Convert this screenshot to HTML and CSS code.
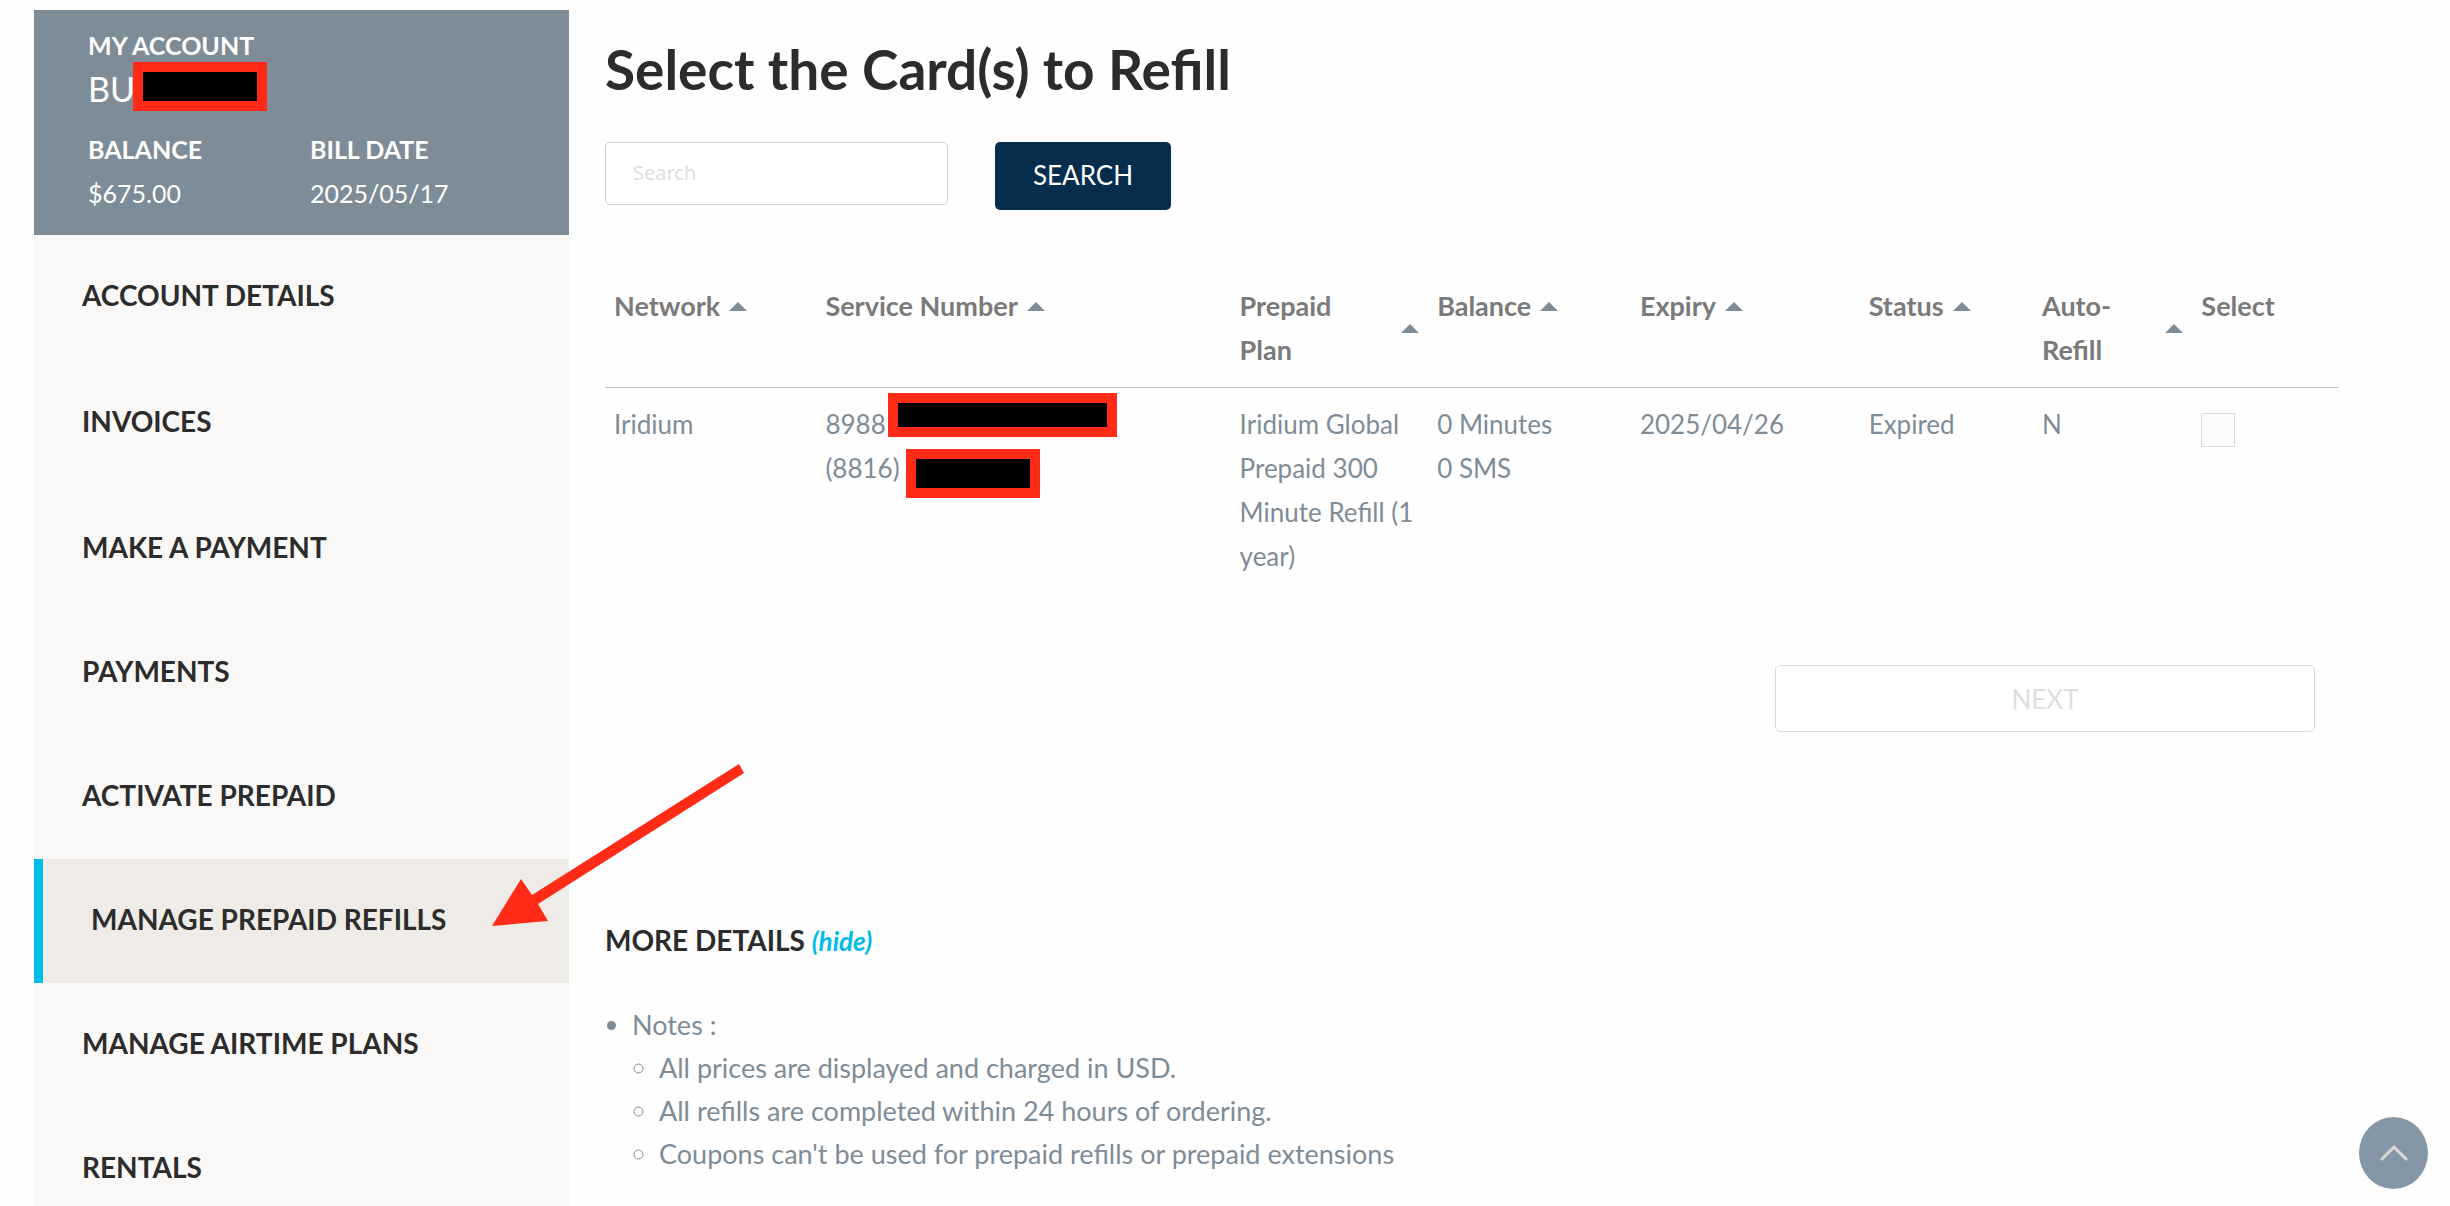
FILE: index.html
```
<!DOCTYPE html>
<html lang="en">
<head>
  <meta charset="utf-8">
  <meta name="viewport" content="width=device-width, initial-scale=1">
  <title>Manage Prepaid Refills</title>
  <link rel="stylesheet" href="styles.css">
</head>
<body>
  <div class="page">
    <aside class="sidebar">
      <section class="account">
        <h2 class="account-label">MY ACCOUNT</h2>
        <p class="account-name">BU<span class="redact redact-name"></span></p>
        <dl class="account-facts">
          <div><dt class="account-label">BALANCE</dt><dd>$675.00</dd></div>
          <div><dt class="account-label">BILL DATE</dt><dd>2025/05/17</dd></div>
        </dl>
      </section>
      <nav>
        <ul class="menu">
          <li><a href="#">ACCOUNT DETAILS</a></li>
          <li><a href="#">INVOICES</a></li>
          <li><a href="#">MAKE A PAYMENT</a></li>
          <li><a href="#">PAYMENTS</a></li>
          <li><a href="#">ACTIVATE PREPAID</a></li>
          <li class="active"><a href="#" aria-current="page">MANAGE PREPAID REFILLS</a>
            <svg class="arrow" width="252" height="164" viewBox="0 0 252 164" aria-hidden="true"><path d="M247 0L252 9L46 140L56 157L0 162L29 115L40 131Z" fill="#ff2b17"/></svg>
          </li>
          <li><a href="#">MANAGE AIRTIME PLANS</a></li>
          <li><a href="#">RENTALS</a></li>
        </ul>
      </nav>
    </aside>

    <main class="main">
      <h1>Select the Card(s) to Refill</h1>
      <form class="search">
        <input type="text" placeholder="Search" aria-label="Search">
        <button type="button">SEARCH</button>
      </form>

      <table class="cards">
        <colgroup>
          <col class="c-network"><col class="c-service"><col class="c-plan"><col class="c-balance">
          <col class="c-expiry"><col class="c-status"><col class="c-auto"><col>
        </colgroup>
        <thead>
          <tr>
            <th scope="col"><button class="sort" type="button">Network</button></th>
            <th scope="col"><button class="sort" type="button">Service Number</button></th>
            <th scope="col"><button class="sort sort-wide" type="button"><span>Prepaid<br>Plan</span></button></th>
            <th scope="col"><button class="sort" type="button">Balance</button></th>
            <th scope="col"><button class="sort" type="button">Expiry</button></th>
            <th scope="col"><button class="sort" type="button">Status</button></th>
            <th scope="col"><button class="sort sort-wide" type="button"><span>Auto-<br>Refill</span></button></th>
            <th scope="col">Select</th>
          </tr>
        </thead>
        <tbody>
          <tr>
            <td>Iridium</td>
            <td>
              <div class="number">8988<span class="redact redact-sim"></span></div>
              <div class="number">(8816) 3<span class="redact redact-phone"></span></div>
            </td>
            <td>Iridium Global<br>Prepaid 300<br>Minute Refill (1<br>year)</td>
            <td>0 Minutes<br>0 SMS</td>
            <td>2025/04/26</td>
            <td>Expired</td>
            <td>N</td>
            <td><input class="check" type="checkbox" aria-label="Select Iridium card"></td>
          </tr>
        </tbody>
      </table>

      <div class="actions"><button class="next" type="button" disabled>NEXT</button></div>

      <h3>MORE DETAILS <a href="#">(hide)</a></h3>
      <ul class="notes">
        <li>Notes :
          <ul>
            <li>All prices are displayed and charged in USD.</li>
            <li>All refills are completed within 24 hours of ordering.</li>
            <li>Coupons can't be used for prepaid refills or prepaid extensions</li>
          </ul>
        </li>
      </ul>
    </main>
  </div>

  <button class="to-top" type="button" aria-label="Back to top">
    <svg width="28" height="18" viewBox="0 0 28 18" aria-hidden="true"><path d="M2 15L14 3L26 15" fill="none" stroke="#dcdad7" stroke-width="3" stroke-linecap="round"/></svg>
  </button>
</body>
</html>
```
FILE: styles.css
```
* {
  box-sizing: border-box;
}

body {
  margin: 0;
  background: #fefefe;
  color: #7e8c97;
  font: 27px/44px Lato, "Liberation Sans", sans-serif;
}

h1, h2, h3, p, ul, dl, dd {
  margin: 0;
  padding: 0;
}

button, input {
  font: inherit;
  margin: 0;
}

a {
  text-decoration: none;
}

.page {
  display: flex;
  gap: 36px;
  min-height: 100vh;
  padding: 10px 112px 0 34px;
}

/* Sidebar */
.sidebar {
  flex: 0 0 535px;
  background: #f9f8f6;
}

.account {
  height: 225px;
  padding: 13px 54px 0;
  background: #7e8c97;
  color: #fff;
}

.account-label {
  font-size: 25px;
  font-weight: 700;
  line-height: 44px;
}

.account-name {
  position: relative;
  font-size: 34px;
}

.account-facts {
  display: grid;
  grid-template-columns: 222px 1fr;
  margin-top: 16px;
}

.account-facts dd {
  font-size: 25px;
}

.menu {
  list-style: none;
}

.menu li {
  position: relative;
}

.menu li:nth-child(-n+2) {
  margin-bottom: 2px;
}

.menu a {
  display: block;
  padding: 38px 48px 42px;
  color: #2c2c2c;
  font-size: 28px;
  font-weight: 700;
}

.menu .active a {
  border-left: 9px solid #00bce7;
  background: #efece7;
}

/* Markup laid over the page */
.arrow {
  position: absolute;
  z-index: 1;
  left: 458px;
  top: -95px;
  pointer-events: none;
}

.redact {
  position: absolute;
  border: 10px solid #ff2b17;
  background: #000;
}

.redact-name {
  left: 45px;
  top: -5px;
  width: 134px;
  height: 49px;
}

.redact-sim {
  left: 63px;
  top: -9px;
  width: 229px;
  height: 44px;
}

.redact-phone {
  left: 81px;
  top: 3px;
  width: 134px;
  height: 49px;
}

/* Main column */
.main {
  flex: 1;
  min-width: 0;
}

h1 {
  margin-bottom: 14px;
  color: #2c2c2c;
  font-size: 55px;
  line-height: 118px;
}

.search {
  display: flex;
  align-items: flex-start;
  gap: 47px;
  margin-bottom: 74px;
}

.search input {
  width: 343px;
  height: 63px;
  padding: 0 27px 2px;
  border: 1px solid #d0d0d0;
  border-radius: 5px;
  background: #fff;
  font: 20px "Noto Sans", sans-serif;
}

.search input::placeholder {
  color: #dedede;
}

.search button {
  width: 176px;
  height: 68px;
  padding: 0 0 3px;
  border: 0;
  border-radius: 5px;
  background: #072d4d;
  color: #fff;
  font-size: 26px;
}

.cards {
  width: 100%;
  table-layout: fixed;
  border-collapse: collapse;
  text-align: left;
}

.c-network { width: 12.2%; }
.c-service { width: 23.9%; }
.c-plan { width: 11.4%; }
.c-balance { width: 11.7%; }
.c-expiry { width: 13.2%; }
.c-status { width: 10%; }
.c-auto { width: 9.2%; }

.cards th {
  padding: 0 9px 15px;
  border-bottom: 1px solid #bfc1c3;
  color: #7a7a7a;
  vertical-align: top;
}

.cards td {
  padding: 14px 9px 0;
  font-size: 26px;
  vertical-align: top;
  white-space: nowrap;
}

.sort {
  display: flex;
  align-items: center;
  gap: 9px;
  padding: 0;
  border: 0;
  background: none;
  color: inherit;
  text-align: left;
}

.sort::after {
  content: "";
  border: solid transparent;
  border-width: 0 9px 9px;
  border-bottom-color: #7e8c97;
}

.sort-wide {
  justify-content: space-between;
  width: 100%;
}

.number {
  position: relative;
}

.check {
  display: block;
  width: 34px;
  height: 34px;
  margin-top: 11px;
  border: 1px solid #dcdcdc;
  background: #fcfcfc;
  appearance: none;
}

.actions {
  display: flex;
  justify-content: flex-end;
  margin: 87px 23px 186px 0;
}

.next {
  width: 540px;
  height: 67px;
  border: 1px solid #dcdcdc;
  border-radius: 5px;
  background: #fff;
  color: #dedede;
  font-size: 26px;
}

h3 {
  margin-bottom: 40px;
  color: #2c2c2c;
  font-size: 28px;
}

h3 a {
  color: #00bce7;
  font-size: 26px;
  font-style: italic;
}

.notes {
  line-height: 43px;
}

.notes, .notes ul {
  padding-left: 27px;
}

.to-top {
  position: fixed;
  right: 22px;
  bottom: 17px;
  display: flex;
  align-items: center;
  justify-content: center;
  width: 69px;
  height: 72px;
  padding: 0;
  border: 0;
  border-radius: 50%;
  background: #8597a6;
}
```
